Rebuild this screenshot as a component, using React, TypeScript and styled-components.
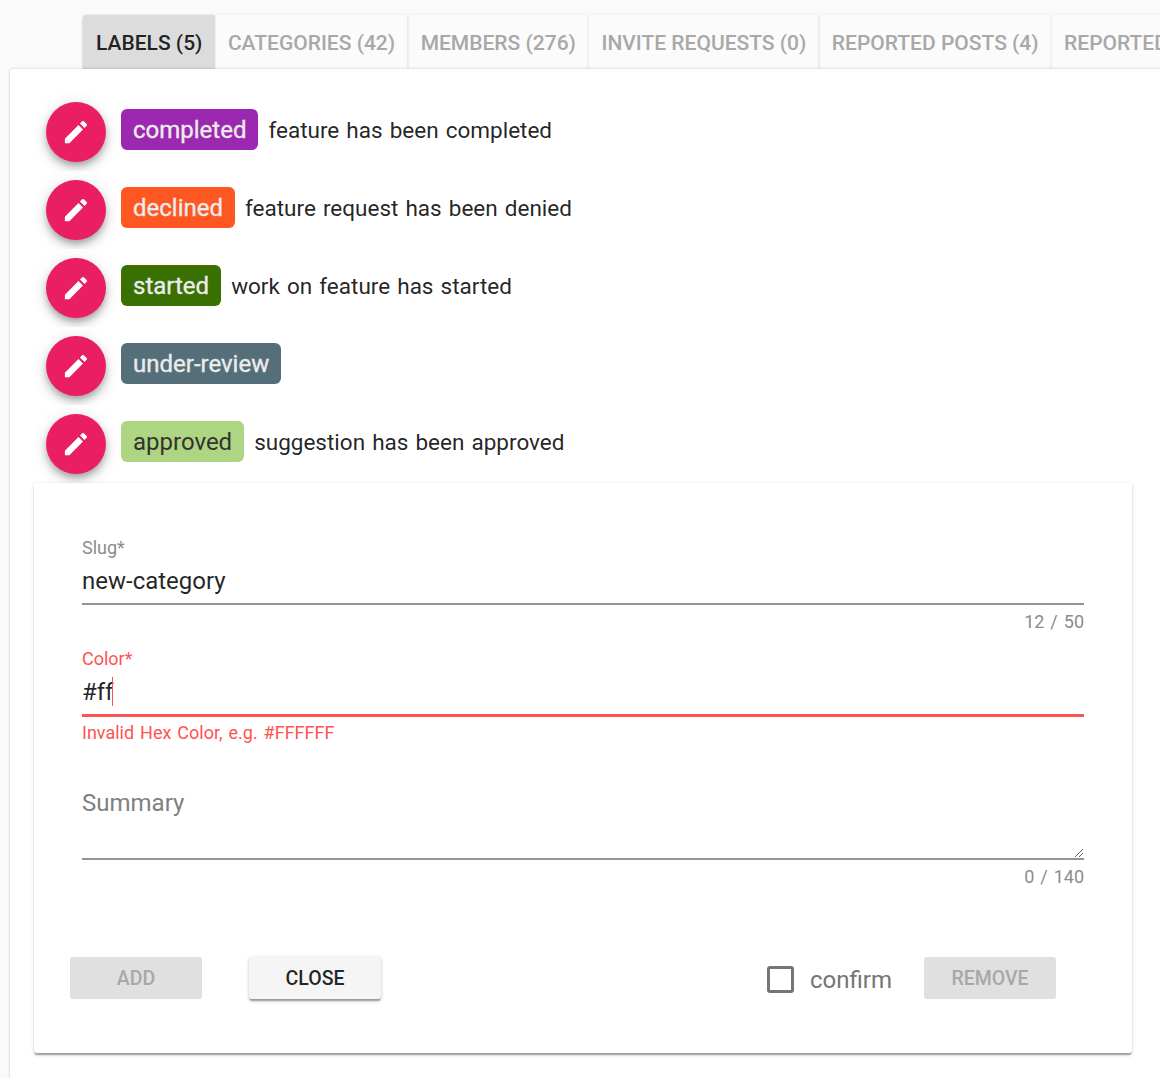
import React from 'react';
import styled, { createGlobalStyle } from 'styled-components';

const GlobalStyle = createGlobalStyle`
  *, *::before, *::after { box-sizing: border-box; }
  body {
    margin: 0;
    overflow: hidden;
    background: #fafafa;
    font-family: Roboto, "Liberation Sans", sans-serif;
    color: rgba(0, 0, 0, 0.87);
  }
`;

const Page = styled.div`
  height: 1078px;
  overflow: hidden;
  padding-top: 15px;
`;

const TabBar = styled.nav`
  display: flex;
  height: 54px;
  padding-left: 83px;
`;

const Tab = styled.button<{ $active?: boolean }>`
  flex: none;
  height: 54px;
  margin: 0 0.5px 0 0;
  padding: 2px 12px 0 13px;
  border: 0;
  border-radius: ${(p) => (p.$active ? '4px 0 0 4px' : '0')};
  background: ${(p) => (p.$active ? '#dcdcdc' : '#fbfbfb')};
  box-shadow: ${(p) =>
    p.$active
      ? '0 1px 2px rgba(0, 0, 0, 0.24), 0 0 3px rgba(0, 0, 0, 0.1)'
      : 'inset 2px 0 2px -1px rgba(0, 0, 0, 0.06), 0 0 3px rgba(0, 0, 0, 0.08)'};
  color: ${(p) => (p.$active ? 'rgba(0, 0, 0, 0.87)' : '#a8a8a8')};
  font: 500 21px/52px Roboto, "Liberation Sans", sans-serif;
  white-space: nowrap;
`;

const Panel = styled.main`
  position: relative;
  width: 1200px;
  height: 1060px;
  margin-left: 10px;
  padding: 24px 0 0 24px;
  border-radius: 3px;
  background: #fff;
  box-shadow: 0 0 3px rgba(0, 0, 0, 0.22);
`;

const LabelRow = styled.div`
  display: flex;
  height: 78px;
  padding: 9px 12px 0;
  overflow: hidden;
`;

const EditButton = styled.button`
  display: flex;
  flex: none;
  align-items: center;
  justify-content: center;
  width: 60px;
  height: 60px;
  margin: 0 15px 0 0;
  padding: 0;
  border: 0;
  border-radius: 50%;
  background: #e91e63;
  box-shadow:
    0 4.5px 7.5px -1.5px rgba(0, 0, 0, 0.26),
    0 6px 12px 0 rgba(0, 0, 0, 0.14),
    0 1.5px 20px 0 rgba(0, 0, 0, 0.08);
`;

const LabelText = styled.div`
  display: flex;
  align-items: baseline;
  height: 41px;
  margin-top: 7px;
`;

const Chip = styled.span<{ $bg: string; $fg: string; $heavy: boolean }>`
  height: 41px;
  padding: 1px 12px 0;
  border-radius: 6px;
  background: ${(p) => p.$bg};
  color: ${(p) => p.$fg};
  font-size: 24px;
  line-height: 41px;
  -webkit-text-stroke: ${(p) => (p.$heavy ? '0.35px' : '0')} ${(p) => p.$fg};
`;

const Description = styled.span`
  margin-left: 10px;
  font-size: 22.5px;
  line-height: 41px;
  word-spacing: 1.5px;
`;

const Card = styled.section`
  width: 1098px;
  height: 570px;
  padding: 48px 48px 0;
  border-radius: 3px;
  background: #fff;
  box-shadow:
    0 3px 1.5px -1.5px rgba(0, 0, 0, 0.2),
    0 1.5px 1.5px 0 rgba(0, 0, 0, 0.14),
    0 1.5px 4.5px 0 rgba(0, 0, 0, 0.12);
`;

const Field = styled.div`
  display: flex;
  flex-direction: column;
  margin-bottom: 3px;
`;

const FieldLabel = styled.label<{ $error?: boolean }>`
  height: 34px;
  color: ${(p) => (p.$error ? '#ff5252' : '#8c8c8c')};
  font-size: 18px;
  line-height: 34px;
`;

const FieldValue = styled.div<{ $error?: boolean }>`
  display: flex;
  height: ${(p) => (p.$error ? 41 : 40)}px;
  border-bottom: ${(p) => (p.$error ? '3px solid #ff5252' : '2px solid #949494')};
  font-size: 24px;
  line-height: 32px;
`;

const Caret = styled.span`
  width: 1px;
  height: 29px;
  margin: 1px 0 0 -1px;
  background: #ff5252;
`;

const Hint = styled.div<{ $error?: boolean }>`
  height: ${(p) => (p.$error ? 32 : 34)}px;
  color: ${(p) => (p.$error ? '#ff5252' : '#8c8c8c')};
  font-size: 18px;
  line-height: ${(p) => (p.$error ? 32 : 34)}px;
  text-align: ${(p) => (p.$error ? 'left' : 'right')};
  word-spacing: 1.5px;
`;

const SummaryArea = styled.div`
  display: flex;
  align-items: flex-end;
  justify-content: space-between;
  height: 76px;
  margin-top: 32px;
  border-bottom: 2px solid #949494;
`;

const Placeholder = styled.span`
  align-self: flex-start;
  color: #808080;
  font-size: 24px;
  line-height: 38px;
`;

const Actions = styled.div`
  display: flex;
  align-items: center;
  height: 42px;
  margin: 63px -20px 0 -12px;
`;

const ActionButton = styled.button<{ $raised?: boolean }>`
  width: 132px;
  height: 42px;
  padding: 2px 0 0;
  border: 0;
  border-radius: 3px;
  background: ${(p) => (p.$raised ? '#f5f5f5' : '#e0e0e0')};
  box-shadow: ${(p) =>
    p.$raised
      ? '0 3px 1.5px -1.5px rgba(0,0,0,.2), 0 1.5px 1.5px 0 rgba(0,0,0,.14), 0 1.5px 4.5px 0 rgba(0,0,0,.16)'
      : 'none'};
  color: ${(p) => (p.$raised ? 'rgba(0, 0, 0, 0.87)' : '#a8a8a8')};
  font: 500 19.5px/40px Roboto, "Liberation Sans", sans-serif;
`;

const CloseSlot = styled.div`
  display: flex;
  margin-left: 47px;
`;

const ConfirmLabel = styled.label`
  display: flex;
  align-items: center;
  gap: 16.5px;
  margin: 4px 32px 0 auto;
  color: #757575;
  font-size: 24px;
  line-height: 42px;
`;

const CheckBox = styled.span`
  width: 27px;
  height: 27px;
  margin-top: -1px;
  border: 3px solid #757575;
  border-radius: 3px;
`;

const RemoveSlot = styled.div`
  display: flex;
  margin-right: 48px;
`;

const PencilIcon = () => (
  <svg width="30" height="30" viewBox="0 0 24 24" fill="#fff">
    <path d="M3.1 17.4V21h3.6L17.6 10l-3.6-3.6L3.1 17.4zM20.5 7.1a1 1 0 0 0 0-1.41l-2.2-2.2a1 1 0 0 0-1.41 0l-1.7 1.7 3.6 3.6 1.7-1.7z" />
  </svg>
);

const ResizeGrip = () => (
  <svg width="10" height="10" viewBox="0 0 10 10" stroke="#555" strokeWidth="0.9">
    <path d="M1 9L9 1M5 9L9 5" />
  </svg>
);

const tabs = [
  'LABELS (5)',
  'CATEGORIES (42)',
  'MEMBERS (276)',
  'INVITE REQUESTS (0)',
  'REPORTED POSTS (4)',
  'REPORTED COMMENTS (0)',
];

const light = '#ececec';

const labels = [
  { slug: 'completed', summary: 'feature has been completed', bg: '#9c27b0', fg: light },
  { slug: 'declined', summary: 'feature request has been denied', bg: '#ff5722', fg: light },
  { slug: 'started', summary: 'work on feature has started', bg: '#387002', fg: light },
  { slug: 'under-review', summary: '', bg: '#546e7a', fg: light },
  { slug: 'approved', summary: 'suggestion has been approved', bg: '#aed581', fg: '#333' },
];

export default function App() {
  return (
    <Page>
      <GlobalStyle />
      <TabBar>
        {tabs.map((name, i) => (
          <Tab key={name} $active={i === 0}>{name}</Tab>
        ))}
      </TabBar>
      <Panel>
        {labels.map((label) => (
          <LabelRow key={label.slug}>
            <EditButton aria-label="Edit"><PencilIcon /></EditButton>
            <LabelText>
              <Chip $bg={label.bg} $fg={label.fg} $heavy={label.fg === light}>{label.slug}</Chip>
              {label.summary && <Description>{label.summary}</Description>}
            </LabelText>
          </LabelRow>
        ))}
        <Card>
          <Field>
            <FieldLabel>Slug*</FieldLabel>
            <FieldValue>new-category</FieldValue>
            <Hint>12 / 50</Hint>
          </Field>
          <Field>
            <FieldLabel $error>Color*</FieldLabel>
            <FieldValue $error>#ff<Caret /></FieldValue>
            <Hint $error>Invalid Hex Color, e.g. #FFFFFF</Hint>
          </Field>
          <Field>
            <SummaryArea>
              <Placeholder>Summary</Placeholder>
              <ResizeGrip />
            </SummaryArea>
            <Hint>0 / 140</Hint>
          </Field>
          <Actions>
            <ActionButton>ADD</ActionButton>
            <CloseSlot><ActionButton $raised>CLOSE</ActionButton></CloseSlot>
            <ConfirmLabel><CheckBox />confirm</ConfirmLabel>
            <RemoveSlot><ActionButton>REMOVE</ActionButton></RemoveSlot>
          </Actions>
        </Card>
      </Panel>
    </Page>
  );
}
